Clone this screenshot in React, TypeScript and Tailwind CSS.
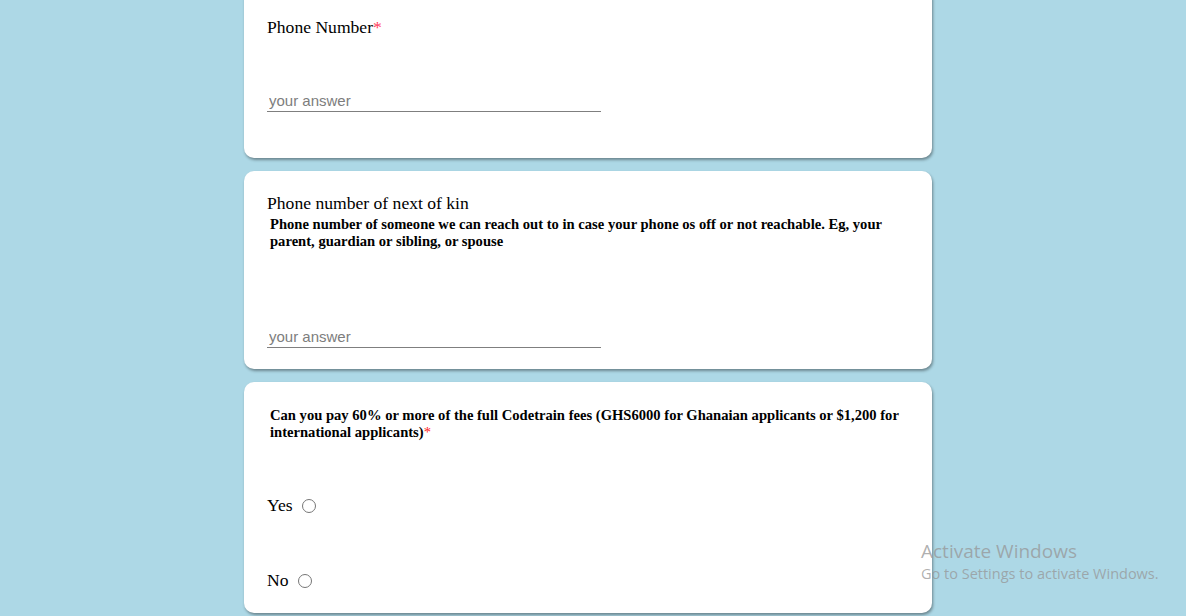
import React from "react";

const serif = { fontFamily: '"Liberation Serif", "Times New Roman", serif' };

function AnswerInput() {
  return (
    <input
      type="text"
      placeholder="your answer"
      className="w-[334px] h-[21px] border-0 border-b border-b-[#7f7f7f] bg-transparent px-[2px] text-[15px] leading-[18px] text-black placeholder:text-[#7d7d7d] outline-none"
      style={{ fontFamily: '"Liberation Sans", Arial, sans-serif' }}
    />
  );
}

function Card({ className, children }: { className?: string; children: React.ReactNode }) {
  return (
    <div
      className={
        "w-[688px] rounded-[10px] bg-white shadow-[1px_2px_3px_rgba(0,0,0,0.38)] flex flex-col pl-[23px] " +
        (className ?? "")
      }
    >
      {children}
    </div>
  );
}

export default function App() {
  return (
    <div className="relative min-h-[616px] w-full bg-[#ADD8E6] overflow-hidden" style={serif}>
      <div className="flex flex-col items-center gap-[13px] -mt-[12px] pr-[10px]">
        <Card className="h-[170px] pt-[29px]">
          <div className="text-[17.6px] leading-[21px] text-black">
            Phone Number<span className="text-[#ff3b5c]">*</span>
          </div>
          <div className="mt-[51px]">
            <AnswerInput />
          </div>
        </Card>

        <Card className="h-[198px] pt-[22px]">
          <div className="text-[17.6px] leading-[21px] text-black">Phone number of next of kin</div>
          <p className="ml-[3px] mt-[2px] pr-[16px] text-[14.6px] leading-[17px] font-bold text-black">
            Phone number of someone we can reach out to in case your phone os off or not reachable. Eg, your
            parent, guardian or sibling, or spouse
          </p>
          <div className="mt-[75px]">
            <AnswerInput />
          </div>
        </Card>

        <Card className="h-[231px] pt-[25px]">
          <p className="ml-[3px] pr-[16px] text-[14.6px] leading-[17px] font-bold text-black">
            Can you pay 60% or more of the full Codetrain fees (GHS6000 for Ghanaian applicants or $1,200 for
            international applicants)<span className="font-normal text-[#ff2020]">*</span>
          </p>
          <label className="mt-[54px] flex items-center text-[17.6px] leading-[21px] text-black">
            Yes
            <input type="radio" name="pay" className="ml-[9px] mt-[1px] w-[14px] h-[14px]" />
          </label>
          <label className="mt-[54px] flex items-center text-[17.6px] leading-[21px] text-black">
            No
            <input type="radio" name="pay" className="ml-[9px] mt-[1px] w-[14px] h-[14px]" />
          </label>
        </Card>
      </div>

      <div
        className="absolute left-[921px] top-[540px] text-[rgba(150,150,150,0.75)] pointer-events-none"
        style={{ fontFamily: '"Open Sans", "Noto Sans", sans-serif' }}
      >
        <div className="text-[19px] leading-[22px]">Activate Windows</div>
        <div className="text-[14.5px] leading-[20px] mt-[2px]">Go to Settings to activate Windows.</div>
      </div>
    </div>
  );
}
